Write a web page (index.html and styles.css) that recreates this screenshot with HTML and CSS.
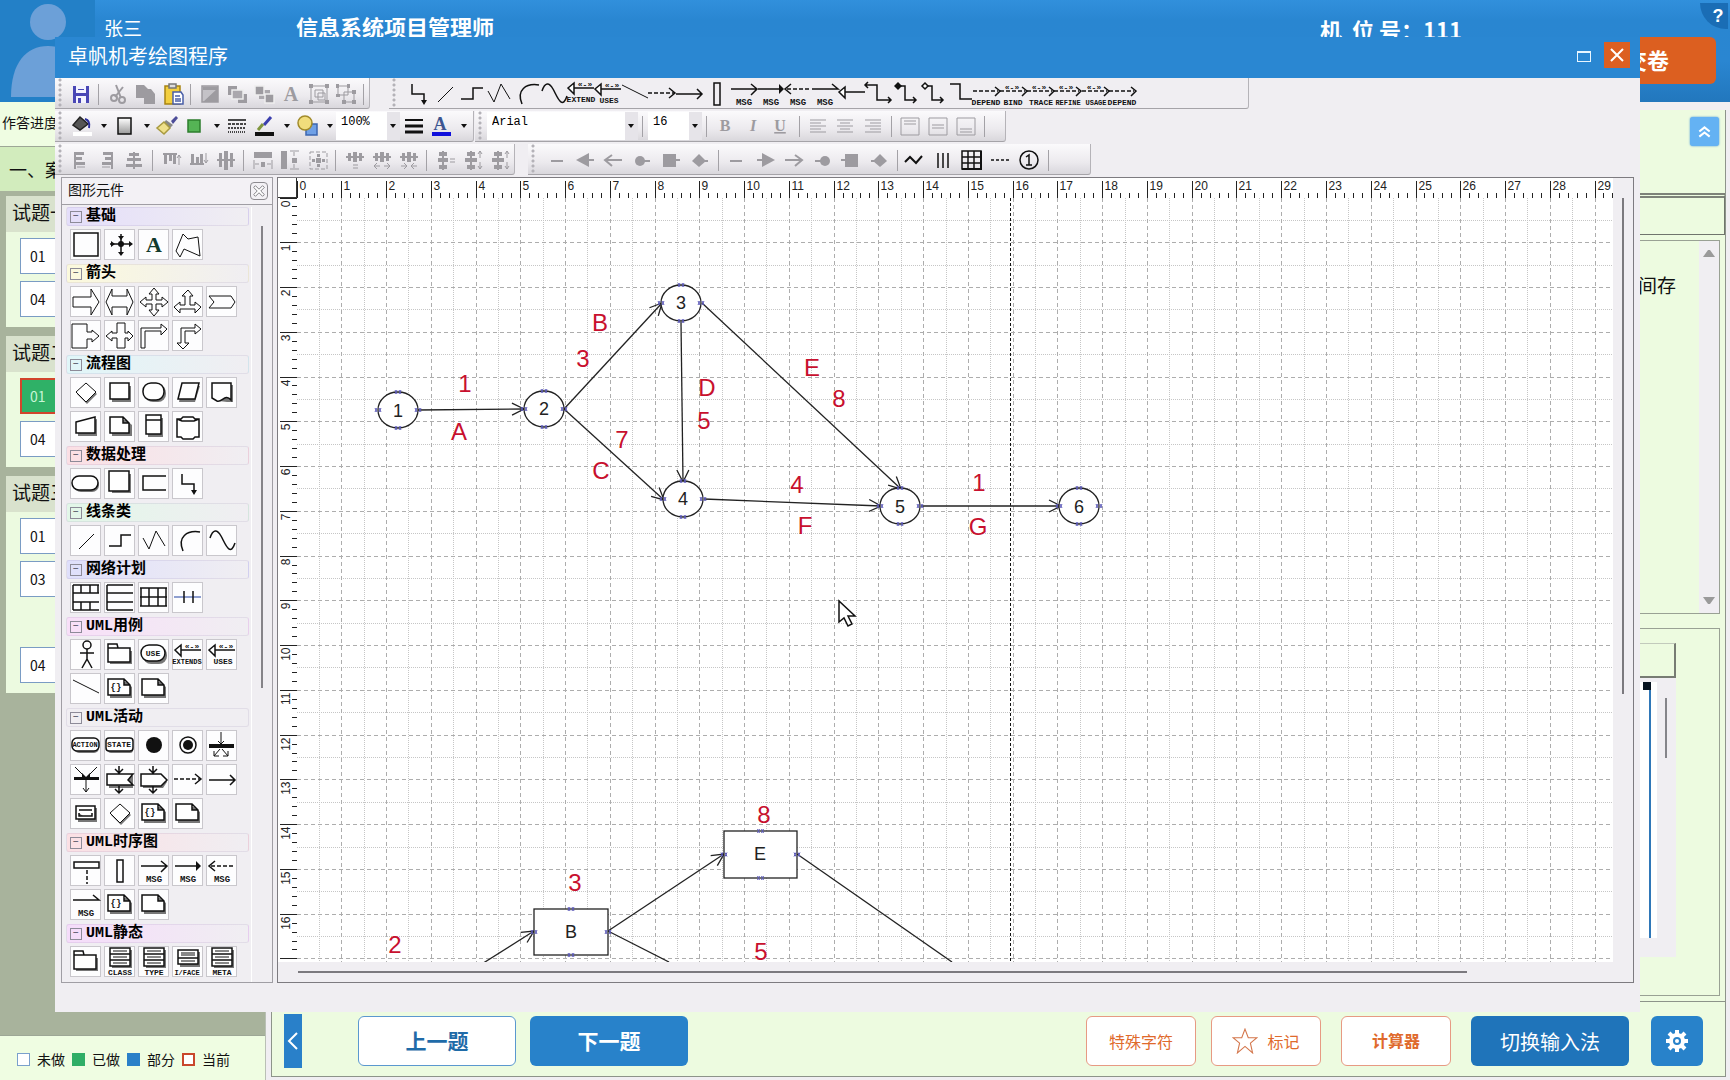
FILE: index.html
```html
<!DOCTYPE html>
<html lang="zh-CN">
<head>
<meta charset="utf-8">
<title>卓帆机考绘图程序</title>
<link rel="stylesheet" href="styles.css">
</head>
<body>
<svg class="sprite" aria-hidden="true">
  <defs>
    <!-- basic shapes -->
    <symbol id="box" viewBox="0 0 28 28"><path d="M3 2h24v23H3z"/></symbol>
    <symbol id="cross" viewBox="0 0 28 28"><path d="M5 13h20M16 3v20"/><path class="f" d="M24 10l4 3-4 3zM13 21l3 4 3-4zM13 5l3 4 3-4zM6 10l4 3-4 3z"/><circle class="f" cx="16" cy="13" r="3"/></symbol>
    <symbol id="letter" viewBox="0 0 28 28"><text class="serif" x="15" y="21">A</text></symbol>
    <symbol id="free" viewBox="0 0 28 28"><path class="t" d="M3 20l7-17 5 5 10-2 2 19-16-7-4 8z"/></symbol>
    <!-- block arrows -->
    <symbol id="a-right" viewBox="0 0 28 28"><path class="t" d="M2 9h18V1l8 13-8 13v-8H2z"/></symbol>
    <symbol id="a-both" viewBox="0 0 28 28"><path class="t" d="M1 14L7 1v7h15V1l6 13-6 13v-8H7v8z"/></symbol>
    <symbol id="a-four" viewBox="0 0 28 28"><path class="t" d="M15 0l5 6h-3v6h6V9l6 5-6 5v-3h-6v6h3l-5 6-5-6h3v-6H7v3l-6-5 6-5v3h6V6h-3z"/></symbol>
    <symbol id="a-three" viewBox="0 0 28 28"><path class="t" d="M15 2l5 6h-3v9h5v-3l6 5-6 6v-4H7v4l-6-6 6-5v3h5V8H9z"/></symbol>
    <symbol id="a-pent" viewBox="0 0 28 28"><path class="t" d="M2 8h22l4 6-4 6H2l5-6z"/></symbol>
    <symbol id="a-box" viewBox="0 0 28 28"><path class="t" d="M1 2h15v8h5V8l7 6-7 6v-3h-5v9H1z"/></symbol>
    <symbol id="a-cross" viewBox="0 0 28 28"><path class="t" d="M12 1h8v10h3V9l5 5-5 5v-3h-3v10h-8V16H7v3l-6-5 6-5v2h5z"/></symbol>
    <symbol id="a-turn" viewBox="0 0 28 28"><path class="t" d="M2 26V6h20V2l6 5-6 6V9H6v17z"/></symbol>
    <symbol id="a-turn2" viewBox="0 0 28 28"><path class="t" d="M8 6h14V2l6 5-6 5V9H12v12h4l-6 6-6-6h4z"/></symbol>
    <!-- flow chart -->
    <symbol id="diamond" viewBox="0 0 28 28"><path class="sh" d="M16 6l10 9-10 10L6 15z"/><path class="w t" d="M15 4l10 9-10 10L5 13z"/></symbol>
    <symbol id="f-rect" viewBox="0 0 28 28"><path class="sh" d="M7 7h19v16H7z"/><path class="w" d="M5 4h19v16H5z"/></symbol>
    <symbol id="f-oval" viewBox="0 0 28 28"><rect class="sh" x="6" y="6" width="21" height="17" rx="8"/><rect class="w" x="4" y="4" width="21" height="17" rx="8"/></symbol>
    <symbol id="f-para" viewBox="0 0 28 28"><path class="sh" d="M9 7h18l-5 16H6z"/><path class="w" d="M9 4h17l-4 16H5z"/></symbol>
    <symbol id="f-doc" viewBox="0 0 28 28"><path class="sh" d="M20 6h6v17h-6l-8-1z"/><path class="w" d="M5 4h19v17c-6-7-9 3-14 1l-5-3z"/></symbol>
    <symbol id="f-trap" viewBox="0 0 28 28"><path class="sh" d="M7 12l19-6v17H7z"/><path class="w" d="M5 9l19-5v16H5z"/></symbol>
    <symbol id="f-note" viewBox="0 0 28 28"><path class="sh" d="M7 7h14l6 5v11H7z"/><path class="w" d="M5 4h13l6 6v10H5zM18 4v6h6"/></symbol>
    <symbol id="f-card" viewBox="0 0 28 28"><path class="sh" d="M9 5h15v19H9z"/><path class="w" d="M7 2h15v19H7zM7 7h15"/></symbol>
    <symbol id="f-cyl" viewBox="0 0 28 28"><path class="w" d="M4 6h4l2-2h10l2 2h4v18h-4l-2 2H10l-2-2H4zM4 6l5 2h12l5-2"/></symbol>
    <symbol id="d-oval" viewBox="0 0 28 28"><rect class="sh" x="3" y="8" width="25" height="14" rx="7"/><rect class="w" x="1" y="6" width="26" height="14" rx="7"/></symbol>
    <symbol id="d-rect" viewBox="0 0 28 28"><path class="sh" d="M7 4h19v19H7z"/><path class="w" d="M4 1h20v20H4z"/></symbol>
    <symbol id="d-open" viewBox="0 0 28 28"><path d="M27 6H4v14h23"/></symbol>
    <symbol id="elbow" viewBox="0 0 28 28"><path d="M9 4v10h12v9"/><path class="f" d="M18 20h6l-3 5z"/></symbol>
    <!-- lines -->
    <symbol id="line" viewBox="0 0 28 28"><path class="t" d="M8 22L23 7"/></symbol>
    <symbol id="step" viewBox="0 0 28 28"><path d="M4 19h12V8h10"/></symbol>
    <symbol id="zig" viewBox="0 0 28 28"><path class="t" d="M4 11l6 11 7-18 9 15"/></symbol>
    <symbol id="arc" viewBox="0 0 28 28"><path d="M10 24C4 10 14 3 27 5"/></symbol>
    <symbol id="wave" viewBox="0 0 28 28"><path d="M3 11C6 2 10 2 14 9s9 22 14 7"/></symbol>
    <!-- network plan -->
    <symbol id="n1" viewBox="0 0 28 28"><path d="M2 1h26M2 9h26M2 18h26M2 26h26M2 1v25M10 1v8M19 1v8M10 18v8M19 18v8M27 1v8"/></symbol>
    <symbol id="n2" viewBox="0 0 28 28"><path d="M2 1h26M2 9h26M2 18h26M2 26h26M2 1v25"/></symbol>
    <symbol id="n3" viewBox="0 0 28 28"><path d="M1 4h27M1 13h27M1 22h27M2 4v18M10 4v18M19 4v18M27 4v18"/></symbol>
    <symbol id="n4" viewBox="0 0 28 28"><path class="blue" d="M1 13h27"/><path d="M11 7v12M20 7v12"/></symbol>
    <!-- UML -->
    <symbol id="actor" viewBox="0 0 28 28"><circle cx="16" cy="4" r="4"/><path d="M16 8v10l-5 9M16 18l5 9M9 12h14"/></symbol>
    <symbol id="folder" viewBox="0 0 28 28"><path class="sh" d="M5 10h22v13H5z"/><path class="w" d="M3 7V3h9l1 4h12v14H3zM3 7h10"/></symbol>
    <symbol id="use" viewBox="0 0 28 28"><rect class="sh" x="4" y="6" width="24" height="17" rx="8"/><rect class="w" x="2" y="4" width="24" height="16" rx="8"/><text class="m" x="14" y="15">USE</text></symbol>
    <symbol id="extends" viewBox="0 0 28 28"><path class="w" d="M28 9H8M8 4L2 9l6 6z"/><text class="m" x="19" y="8">«-»</text><text class="s" x="14" y="23">EXTENDS</text></symbol>
    <symbol id="extend" viewBox="0 0 28 28"><path class="w" d="M28 8H8M8 3L2 8l6 6z"/><text class="m" x="19" y="7">«-»</text><text class="m" x="15" y="22">EXTEND</text></symbol>
    <symbol id="uses" viewBox="0 0 28 28"><path class="w" d="M28 9H8M8 4L2 9l6 6z"/><text class="m" x="19" y="8">«-»</text><text class="m" x="16" y="23">USES</text></symbol>
    <symbol id="uline" viewBox="0 0 28 28"><path class="t" d="M2 5l26 13"/></symbol>
    <symbol id="code" viewBox="0 0 28 28"><path class="sh" d="M5 7h16l6 5v11H5z"/><path class="w" d="M3 4h16l6 6v10H3zM19 4v6h6"/><text x="11" y="15">{}</text></symbol>
    <symbol id="note" viewBox="0 0 28 28"><path class="sh" d="M5 7h16l6 5v11H5z"/><path class="w" d="M3 4h16l6 6v10H3zM19 4v6h6"/></symbol>
    <symbol id="action" viewBox="0 0 28 28"><rect class="sh" x="3" y="8" width="25" height="13" rx="5"/><rect class="w" x="1" y="6" width="27" height="13" rx="5"/><text class="s" x="14" y="15">ACTION</text></symbol>
    <symbol id="state" viewBox="0 0 28 28"><rect class="sh" x="3" y="8" width="25" height="13" rx="3"/><rect class="w" x="1" y="6" width="27" height="13" rx="3"/><text class="m" x="14" y="15">STATE</text></symbol>
    <symbol id="dot" viewBox="0 0 28 28"><circle class="f" cx="15" cy="13" r="8"/></symbol>
    <symbol id="ring" viewBox="0 0 28 28"><circle cx="15" cy="13" r="8"/><circle class="f" cx="15" cy="13" r="5"/></symbol>
    <symbol id="fork" viewBox="0 0 28 28"><path class="t" d="M14 0v12M11 9l3 3 3-3M13 17l-6 7v-5M7 24h5M15 17l6 7v-5M21 24h-5"/><path class="f" d="M2 12h25v4H2z"/></symbol>
    <symbol id="join" viewBox="0 0 28 28"><path class="t" d="M4 1l9 9M26 1l-9 9M15 14v12M12 22l3 4 3-4"/><path class="f" d="M3 11h25v3H3zM11 7l4 4 4-4v5h-8z"/></symbol>
    <symbol id="sig-in" viewBox="0 0 28 28"><path class="sh" d="M4 10h24v12H4z"/><path class="w" d="M2 8h26l-5 6 5 5H2zM14 0v7M10 3l4 4 4-4M14 20v7M10 23l4 4 4-4"/></symbol>
    <symbol id="sig-out" viewBox="0 0 28 28"><path class="sh" d="M4 10h20l4 6-4 6H4z"/><path class="w" d="M2 8h20l6 6-6 6H2zM14 0v7M10 3l4 4 4-4M14 20v7M10 23l4 4 4-4"/></symbol>
    <symbol id="dash" viewBox="0 0 28 28"><path class="d" d="M1 13h26"/><path d="M22 8l6 5-6 5"/></symbol>
    <symbol id="solid" viewBox="0 0 28 28"><path d="M2 14h26M23 9l5 5-5 5"/></symbol>
    <symbol id="sub" viewBox="0 0 28 28"><path class="sh" d="M7 8h19v14H7z"/><path class="w" d="M5 6h19v13H5zM8 10h13M8 13v3h4M21 13v3h-4M11 16h7"/></symbol>
    <symbol id="life" viewBox="0 0 28 28"><path class="w" d="M3 5h25v6H3z"/><path class="d" d="M16 13v14"/></symbol>
    <symbol id="bar" viewBox="0 0 28 28"><path d="M12 3h6v22h-6z"/></symbol>
    <symbol id="msg1" viewBox="0 0 28 28"><path d="M2 9h26M22 4l6 5-6 6"/><text x="15" y="25">MSG</text></symbol>
    <symbol id="msg2" viewBox="0 0 28 28"><path d="M2 9h22"/><path class="f" d="M23 4l5 5-5 5z"/><text x="15" y="25">MSG</text></symbol>
    <symbol id="msg3" viewBox="0 0 28 28"><path class="d" d="M4 9h24"/><path d="M8 4L2 9l6 5"/><text x="15" y="25">MSG</text></symbol>
    <symbol id="msg4" viewBox="0 0 28 28"><path d="M2 9h26l-6-5"/><text x="15" y="25">MSG</text></symbol>
    <symbol id="class" viewBox="0 0 28 28"><path class="sh" d="M7 2h20v18H7z"/><path class="w" d="M5 0h20v18H5zM5 6h20M5 12h20"/><path class="t" d="M8 3h14M8 9h14M8 15h14"/><text class="m" x="15" y="27">CLASS</text></symbol>
    <symbol id="type" viewBox="0 0 28 28"><path class="sh" d="M7 2h20v18H7z"/><path class="w" d="M5 0h20v18H5zM5 6h20M5 12h20"/><path class="t" d="M8 3h14M8 9h14M8 15h14"/><text class="m" x="15" y="27">TYPE</text></symbol>
    <symbol id="iface" viewBox="0 0 28 28"><path class="sh" d="M7 4h20v15H7z"/><path class="w" d="M5 2h20v14H5zM5 10h20"/><path class="t" d="M8 5h14M8 7h14M8 13h14"/><text class="s" x="14" y="27">I/FACE</text></symbol>
    <symbol id="meta" viewBox="0 0 28 28"><path class="sh" d="M7 2h20v18H7z"/><path class="w" d="M5 0h20v18H5zM5 6h20M5 12h20"/><path class="t" d="M8 3h14M8 9h14M8 15h14"/><text class="m" x="15" y="27">META</text></symbol>
    <!-- connector toolbar -->
    <symbol id="gen" viewBox="0 0 28 28"><path class="w" d="M28 12H8M8 7l-6 5 6 6z"/></symbol>
    <symbol id="c1" viewBox="0 0 28 28"><path d="M1 5h12v15h14M4 2L1 5l3 3M24 17l3 3-3 3"/></symbol>
    <symbol id="c2" viewBox="0 0 28 28"><path d="M8 6h5v14h11M21 17l3 3-3 3"/><path class="f" d="M6 2l4 4-4 4-4-4z"/></symbol>
    <symbol id="c3" viewBox="0 0 28 28"><path d="M8 6h5v14h11M21 17l3 3-3 3"/><path class="w" d="M6 3l3 3-3 3-3-3z"/></symbol>
    <symbol id="c4" viewBox="0 0 28 28"><path d="M4 4h10v15h12"/></symbol>
    <symbol id="dep" viewBox="0 0 28 28"><path class="d" d="M0 11h25"/><path d="M22 7l5 4-5 5"/><text class="m" x="13" y="25">DEPEND</text></symbol>
    <symbol id="bind" viewBox="0 0 28 28"><path class="d" d="M0 11h25"/><path d="M22 7l5 4-5 5"/><text class="m" x="12" y="10">«-»</text><text class="m" x="13" y="25">BIND</text></symbol>
    <symbol id="trace" viewBox="0 0 28 28"><path class="d" d="M0 11h25"/><path d="M22 7l5 4-5 5"/><text class="m" x="12" y="10">«-»</text><text class="m" x="14" y="25">TRACE</text></symbol>
    <symbol id="refine" viewBox="0 0 28 28"><path class="d" d="M0 11h25"/><path d="M22 7l5 4-5 5"/><text class="m" x="12" y="10">«-»</text><text class="s" x="14" y="25">REFINE</text></symbol>
    <symbol id="usage" viewBox="0 0 28 28"><path class="d" d="M0 11h25"/><path d="M22 7l5 4-5 5"/><text class="m" x="12" y="10">«-»</text><text class="s" x="14" y="25">USAGE</text></symbol>
    <!-- file and edit toolbar -->
    <symbol id="save" viewBox="0 0 28 28"><path fill="#4a47b5" stroke="none" d="M6 6h16v17H6z"/><path fill="#f4f4ff" stroke="none" d="M9 6h10v7H9zM9 16h10v7H9z"/><path fill="#4a47b5" stroke="none" d="M11 18h3v5h-3zM11 9h6v1h-6z"/></symbol>
    <symbol id="cut" viewBox="0 0 28 28"><path class="g2" d="M12 5l5 13M19 7l-8 10"/><circle class="g2" cx="10" cy="18" r="3"/><circle class="g2" cx="18" cy="20" r="3"/></symbol>
    <symbol id="copy" viewBox="0 0 28 28"><path class="gf" d="M5 5h8l4 4h3l4 5v10H13v-6H5z"/></symbol>
    <symbol id="paste" viewBox="0 0 28 28"><path fill="#f3cf3f" stroke="#a88412" d="M6 6h15v18H6z"/><path fill="#ddd" stroke="#777" d="M10 4h7v4h-7z"/><path fill="#fff" stroke="#4a5fa8" d="M14 12h8l2 3v9H14z"/><path stroke="#4a5fa8" d="M16 16h5M16 19h6M16 21h6"/></symbol>
    <symbol id="image" viewBox="0 0 28 28"><path fill="#c4c2c7" stroke="#9d9ba0" d="M6 6h16v16H6z"/><path class="gf" d="M7 22L22 8v14zM7 7h15v3H7z"/></symbol>
    <symbol id="front" viewBox="0 0 28 28"><path class="gf" d="M5 6h9v9H5zM15 14h9v9h-9z"/><path fill="#aaa8ad" stroke="#eee" d="M9 10h11v9H9z"/></symbol>
    <symbol id="back" viewBox="0 0 28 28"><path fill="#aaa8ad" stroke="none" d="M9 10h11v9H9z"/><path fill="#9d9ba0" stroke="#eee" d="M5 6h9v9H5zM15 14h9v9h-9z"/></symbol>
    <symbol id="gtext" viewBox="0 0 28 28"><text class="serif gray" x="14" y="21">A</text></symbol>
    <symbol id="group" viewBox="0 0 28 28"><path class="g" d="M6 6h16v16H6zM10 10h8v7h-8zM13 13h7v7h-7z"/><path class="gf" d="M4 4h4v4H4zM20 4h4v4h-4zM4 20h4v4H4zM20 20h4v4h-4z"/></symbol>
    <symbol id="ungroup" viewBox="0 0 28 28"><path class="g" d="M6 6h10v9H6zM12 12h10v10H12z"/><path class="gf" d="M4 4h3v4H4zM15 4h3v4h-3zM4 14h4v3H4zM20 10h4v4h-4zM10 20h4v4h-4zM20 20h4v4h-4z"/></symbol>
    <!-- format toolbar -->
    <symbol id="bucket" viewBox="0 0 28 28"><path fill="#555" stroke="#222" d="M13 5l8 7-8 6-7-5z"/><path stroke="#2b2f9c" stroke-width="2" d="M18 7c4 1 5 4 4 9"/><path fill="#fff" stroke="none" d="M6 20h19v4H6z"/></symbol>
    <symbol id="shade" viewBox="0 0 28 28"><path fill="url(#shadeFill)" d="M8 6h13v16H8z"/></symbol>
    <symbol id="brush" viewBox="0 0 28 28"><path fill="#4c4c98" stroke="none" d="M18 9l5-5 2 2-5 6z"/><path fill="#888" stroke="none" d="M13 8l7 5-3 3-6-5z"/><path fill="#efe08a" stroke="#a89a40" d="M11 10l6 6-6 6-7-6z"/></symbol>
    <symbol id="green" viewBox="0 0 28 28"><path fill="#55b455" stroke="#2c7d2c" d="M8 8h12v12H8z"/></symbol>
    <symbol id="dashes" viewBox="0 0 28 28"><path d="M5 8h18"/><path stroke-dasharray="3 1" d="M5 12h18"/><path stroke-dasharray="2 1" d="M5 16h18"/><path stroke-dasharray="1 1" d="M5 20h18"/></symbol>
    <symbol id="pen" viewBox="0 0 28 28"><path stroke="#3b3fae" stroke-width="3" d="M21 5l-7 8"/><path stroke="#80963e" stroke-width="3" d="M13 12l-5 6"/><path class="f" d="M5 20h19v4H5z"/></symbol>
    <symbol id="shapes" viewBox="0 0 28 28"><path fill="#6fa0e6" stroke="#3c66b0" d="M13 12h11v11H13z"/><circle cx="12" cy="11" r="7" fill="#f1dd7c" stroke="#a28b2b"/></symbol>
    <symbol id="weights" viewBox="0 0 28 28"><path stroke-width="2" d="M5 8h18"/><path stroke-width="3" d="M5 14h18M5 20h18"/></symbol>
    <symbol id="fcolor" viewBox="0 0 28 28"><text class="serif navy" x="13" y="18">A</text><path fill="#1010dc" stroke="none" d="M5 20h19v4H5z"/></symbol>
    <symbol id="bold" viewBox="0 0 28 28"><text class="fmt" x="13" y="19">B</text></symbol>
    <symbol id="ital" viewBox="0 0 28 28"><text class="fmt it" x="13" y="19">I</text></symbol>
    <symbol id="under" viewBox="0 0 28 28"><text class="fmt un" x="13" y="19">U</text></symbol>
    <symbol id="al" viewBox="0 0 28 28"><path class="g" d="M5 8h16M5 11h11M5 14h16M5 17h11M5 20h16"/></symbol>
    <symbol id="ac" viewBox="0 0 28 28"><path class="g" d="M5 8h16M8 11h10M5 14h16M8 17h10M5 20h16"/></symbol>
    <symbol id="ar" viewBox="0 0 28 28"><path class="g" d="M5 8h16M10 11h11M5 14h16M10 17h11M5 20h16"/></symbol>
    <symbol id="vt" viewBox="0 0 28 28"><path class="g" d="M4 6h18v17H4zM7 9h12M7 12h12"/></symbol>
    <symbol id="vm" viewBox="0 0 28 28"><path class="g" d="M4 6h18v17H4zM7 13h12M7 16h12"/></symbol>
    <symbol id="vb" viewBox="0 0 28 28"><path class="g" d="M4 6h18v17H4zM7 17h12M7 20h12"/></symbol>
    <!-- align toolbar -->
    <symbol id="s1" viewBox="0 0 28 28"><path class="gf" d="M8 6h2v17H8zM10 6h8v3h-8zM10 11h6v3h-6zM10 16h9v3h-9z"/><path class="g" d="M11 21h8"/></symbol>
    <symbol id="s2" viewBox="0 0 28 28"><path class="gf" d="M18 6h2v17h-2zM10 6h8v3h-8zM12 11h6v3h-6zM9 16h9v3H9z"/><path class="g" d="M9 21h8"/></symbol>
    <symbol id="s3" viewBox="0 0 28 28"><path class="gf" d="M13 6h2v17h-2zM9 7h10v3H9zM7 12h14v3H7zM6 18h16v3H6z"/></symbol>
    <symbol id="s4" viewBox="0 0 28 28"><path class="gf" d="M5 7h14v2H5zM6 9h3v9H6zM11 9h3v6h-3zM15 9h3v9h-3z"/><path class="g" d="M21 19V9M19 12l2-3 2 3"/></symbol>
    <symbol id="s5" viewBox="0 0 28 28"><path class="gf" d="M5 17h14v2H5zM6 8h3v9H6zM11 11h3v6h-3zM15 8h3v9h-3z"/><path class="g" d="M21 7v10M19 14l2 3 2-3"/></symbol>
    <symbol id="s6" viewBox="0 0 28 28"><path class="gf" d="M5 13h18v2H5zM7 7h3v14H7zM12 5h4v19h-4zM18 7h3v14h-3z"/></symbol>
    <symbol id="s7" viewBox="0 0 28 28"><path class="gf" d="M5 6h18v6H5zM12 16h4v5h-4z"/><path class="g" d="M5 14v9M23 14v9M6 18h4M18 18h4"/></symbol>
    <symbol id="s8" viewBox="0 0 28 28"><path class="gf" d="M5 5h6v18H5zM16 12h5v5h-5z"/><path class="g" d="M14 5h9M14 23h9M18 6v4M18 18v4"/></symbol>
    <symbol id="s9" viewBox="0 0 28 28"><path class="g" stroke-dasharray="4 2" d="M6 6h17v17H6z"/><path class="gf" d="M12 12h5v5h-5zM13 8h3v3h-3zM13 18h3v3h-3zM8 13h3v3H8zM18 13h3v3h-3z"/></symbol>
    <symbol id="s10" viewBox="0 0 28 28"><path class="gf" d="M5 10h18v2H5zM7 7h3v8H7zM12 6h4v10h-4zM18 7h3v8h-3z"/><path class="g" d="M12 19h5M12 22h5"/></symbol>
    <symbol id="s11" viewBox="0 0 28 28"><path class="gf" d="M5 10h18v2H5zM7 7h3v8H7zM12 6h4v10h-4zM18 7h3v8h-3z"/><path class="g" d="M6 20h6M9 17l-3 3 3 3M16 20h6M19 17l3 3-3 3"/></symbol>
    <symbol id="s12" viewBox="0 0 28 28"><path class="gf" d="M5 10h18v2H5zM7 7h3v8H7zM12 6h4v10h-4zM18 7h3v8h-3z"/><path class="g" d="M6 20h6M9 17l3 3-3 3M16 20h6M19 17l-3 3 3 3"/></symbol>
    <symbol id="s13" viewBox="0 0 28 28"><path class="gf" d="M10 5h2v19h-2zM7 6h8v4H7zM6 12h10v4H6zM7 19h8v4H7z"/><path class="g" d="M18 13h5M18 16h5"/></symbol>
    <symbol id="s14" viewBox="0 0 28 28"><path class="gf" d="M10 5h2v19h-2zM7 6h8v4H7zM5 12h12v4H5zM7 19h8v4H7z"/><path class="g" d="M20 5v7M18 8l2-3 2 3M20 16v7M18 20l2 3 2-3"/></symbol>
    <!-- line end toolbar -->
    <symbol id="e1" viewBox="0 0 28 28"><path class="g2" d="M8 15h12"/></symbol>
    <symbol id="e2" viewBox="0 0 28 28"><path class="g2" d="M17 14h5"/><path class="gf" d="M4 14l13-7v14z"/></symbol>
    <symbol id="e3" viewBox="0 0 28 28"><path class="g2" d="M5 14h17M12 9l-7 5 7 6"/></symbol>
    <symbol id="e4" viewBox="0 0 28 28"><path class="g2" d="M15 15h6"/><circle class="gf" cx="11" cy="15" r="5"/></symbol>
    <symbol id="e5" viewBox="0 0 28 28"><path class="g2" d="M17 14h6"/><path class="gf" d="M6 8h13v13H6z"/></symbol>
    <symbol id="e6" viewBox="0 0 28 28"><path class="g2" d="M17 15h5"/><path class="gf" d="M13 8l7 7-7 6-7-6z"/></symbol>
    <symbol id="jag" viewBox="0 0 28 28"><path stroke-width="2" d="M4 16l5-5 6 6 6-7"/></symbol>
    <symbol id="cols" viewBox="0 0 28 28"><path d="M8 7v15M13 7v15M18 7v15"/></symbol>
    <symbol id="grid" viewBox="0 0 28 28"><path d="M4 5h19v18H4zM4 11h19M4 17h19M10 5v18M16 5v18"/><path stroke-width="2" d="M4 23h19V5"/></symbol>
    <symbol id="dsh" viewBox="0 0 28 28"><path stroke-dasharray="3 2" d="M4 14h18"/></symbol>
    <symbol id="one" viewBox="0 0 28 28"><circle cx="13" cy="14" r="9"/><path d="M10 11l3-2v10M10 19h6"/></symbol>
    <linearGradient id="shadeFill" x2="0" y2="1"><stop stop-color="#fff"/><stop offset="1" stop-color="#999"/></linearGradient>
    <marker id="open" viewBox="0 0 14 14" refX="13" refY="7" markerWidth="14" markerHeight="14" markerUnits="userSpaceOnUse" orient="auto"><path d="M1 1l12 6-12 6" fill="none" stroke="#222" stroke-width="1.3"/></marker>
  </defs>
</svg>

<div class="app">
  <header class="top">
    <div class="avatar"><svg viewBox="0 0 95 102" aria-hidden="true"><circle cx="48" cy="22" r="18"/><path d="M11 97c0-34 15-51 37-51s37 17 37 51z"/></svg></div>
    <span class="user">张三</span>
    <h1 class="exam">信息系统项目管理师</h1>
    <span class="seat">机&nbsp; 位 号：111</span>
    <button class="submit" type="button">交卷</button>
    <button class="help" type="button">?</button>
  </header>

  <div class="body">
    <aside class="side">
      <p class="progress">作答进度</p>
      <h2 class="part">一、案</h2>
      <div class="cards">
        <section class="card"><h3>试题一</h3><div class="cells"><button type="button">01</button><button type="button">04</button></div></section>
        <section class="card"><h3>试题二</h3><div class="cells"><button type="button" class="now">01</button><button type="button">04</button></div></section>
        <section class="card"><h3>试题三</h3><div class="cells"><button type="button">01</button><button type="button">03</button><span></span><button type="button">04</button></div></section>
      </div>
      <ul class="legend">
        <li><i class="todo"></i>未做</li><li><i class="done"></i>已做</li><li><i class="partly"></i>部分</li><li><i class="current"></i>当前</li>
      </ul>
    </aside>

    <main class="main">
      <div class="paper">
        <div class="paper-top"><button class="up" type="button" aria-label="收起"><svg viewBox="0 0 28 28"><path d="M9 14l5-4 5 4M9 19l5-4 5 4"/></svg></button></div>
        <div class="strip"></div>
        <div class="question"><p>间存</p><div class="qbar"><i class="tri-up"></i><i class="tri-down"></i></div></div>
        <div class="answer">
          <div class="answer-tools"></div>
          <div class="editor"><div class="sheet"></div><div class="thumb"></div></div>
        </div>
      </div>
      <nav class="actions">
        <button class="fold" type="button" aria-label="折叠"><svg viewBox="0 0 18 54"><path d="M13 19l-8 8 8 8"/></svg></button>
        <button class="btn nav prev" type="button">上一题</button>
        <button class="btn nav next" type="button">下一题</button>
        <span class="grow"></span>
        <button class="btn tool" type="button">特殊字符</button>
        <button class="btn tool" type="button"><svg class="star" viewBox="0 0 24 24"><path d="M12 1l3 8h8l-6 5 2 9-7-6-7 6 2-9-6-5h8z"/></svg>标记</button>
        <button class="btn tool calc" type="button">计算器</button>
        <button class="btn ime" type="button">切换输入法</button>
        <button class="btn gear" type="button" aria-label="设置"><svg viewBox="0 0 24 24"><circle cx="12" cy="12" r="8"/><path class="teeth" d="M12 1v22M1 12h22M4 4l16 16M20 4L4 20"/><circle class="hole" cx="12" cy="12" r="4"/><circle class="pin" cx="12" cy="12" r="2"/></svg></button>
      </nav>
    </main>
  </div>

  <div class="dialog" role="dialog" aria-label="卓帆机考绘图程序">
    <div class="titlebar">
      <h2>卓帆机考绘图程序</h2>
      <button class="max" type="button" aria-label="最大化"></button>
      <button class="close" type="button" aria-label="关闭"><svg viewBox="0 0 26 26"><path d="M7 7l12 12M19 7L7 19"/></svg></button>
    </div>

    <div class="toolbars">
      <div class="row">
        <div class="bar b-file" data-icons="save | cut copy paste | image front back gtext group ungroup |"></div>
        <div class="bar b-lines" data-icons="elbow line step zig arc wave extend uses uline dash solid bar msg1 msg2 msg3 msg4 gen c1 c2 c3 c4 dep bind trace refine usage dep"></div>
      </div>
      <div class="row">
        <div class="bar b-style">
          <span class="set" data-icons="bucket v shade v brush green v dashes pen v shapes v"></span>
          <label class="combo zoom"><select aria-label="缩放"><option>100%</option></select></label>
          <span class="set" data-icons="weights fcolor v"></span>
        </div>
        <div class="bar b-font">
          <label class="combo face"><select aria-label="字体"><option>Arial</option></select></label>
          <i class="sep"></i>
          <label class="combo size"><select aria-label="字号"><option>16</option></select></label>
          <i class="sep"></i>
          <span class="set" data-icons="bold ital under | al ac ar | vt vm vb |"></span>
        </div>
      </div>
      <div class="row">
        <div class="bar b-align" data-icons="s1 s2 s3 | s4 s5 s6 | s7 s8 s9 | s10 s11 s12 | s13 s14 s14"></div>
        <div class="bar b-ends" data-icons="e1 e2 e3 e4 e5 e6 | e1 e2* e3* e4* e5* e6* | jag cols grid dsh one |"></div>
      </div>
    </div>

    <div class="work">
      <section class="panel">
        <div class="panel-title"><h3>图形元件</h3><button type="button" aria-label="关闭面板"><svg viewBox="0 0 18 18"><path d="M5 3l4 4 4-4 2 2-4 4 4 4-2 2-4-4-4 4-2-2 4-4-4-4z"/></svg></button></div>
        <div class="panel-body"><div class="groups" id="groups"></div><div class="thumb"></div></div>
      </section>

      <section class="pane">
        <div class="corner"></div>
        <svg class="ruler-x" id="rulerX"></svg>
        <svg class="ruler-y" id="rulerY"></svg>
        <svg class="canvas">
          <g id="gridlines"></g>
          <path class="page-edge" d="M713 0v1200"/>
          <g class="edges">
            <path d="M121 212L227 211"/><path d="M267 211L365 105"/><path d="M267 211L367 302"/>
            <path d="M384 124L386 284"/><path d="M405 105L604 291"/><path d="M407 301L584 308"/><path d="M624 308L764 308"/>
            <path d="M150 788L237 733"/><path d="M311 733L427 656"/>
            <path class="plain" d="M311 733L372 764"/><path class="plain" d="M500 656L655 764"/>
          </g>
          <g class="nodes">
            <ellipse cx="101" cy="212" rx="20" ry="18"/><ellipse cx="247" cy="211" rx="20" ry="18"/><ellipse cx="384" cy="105" rx="20" ry="18"/>
            <ellipse cx="386" cy="301" rx="20" ry="18"/><ellipse cx="603" cy="308" rx="20" ry="18"/><ellipse cx="782" cy="308" rx="20" ry="18"/>
            <rect x="237" y="711" width="74" height="46"/><rect x="427" y="633" width="73" height="47"/>
          </g>
          <g class="names">
            <text x="101" y="219">1</text><text x="247" y="217">2</text><text x="384" y="111">3</text><text x="386" y="307">4</text>
            <text x="603" y="315">5</text><text x="782" y="315">6</text><text x="274" y="740">B</text><text x="463" y="662">E</text>
          </g>
          <g class="notes">
            <text x="303" y="133">B</text><text x="286" y="169">3</text><text x="168" y="194">1</text><text x="162" y="242">A</text>
            <text x="410" y="198">D</text><text x="407" y="231">5</text><text x="515" y="178">E</text><text x="542" y="209">8</text>
            <text x="325" y="250">7</text><text x="304" y="281">C</text><text x="500" y="295">4</text><text x="508" y="336">F</text>
            <text x="682" y="293">1</text><text x="681" y="337">G</text><text x="467" y="625">8</text><text x="278" y="693">3</text>
            <text x="98" y="755">2</text><text x="464" y="762">5</text>
          </g>
          <path class="cursor" d="M542 403v21l5-4 4 8 4-2-4-8h7z"/>
        </svg>
        <div class="vbar"><div class="thumb"></div></div>
        <div class="hbar"><div class="thumb"></div></div>
      </section>
    </div>
    <div class="status"></div>
  </div>
</div>
<script src="script.js"></script>
</body>
</html>
```
FILE: styles.css
```css
* { box-sizing: border-box; }
body { margin: 0; font-family: "Liberation Sans", "Noto Sans CJK SC", sans-serif; color: #111; background: #f0eef2; overflow: hidden; }
h1, h2, h3, p, ul { margin: 0; padding: 0; font-weight: normal; }
button { padding: 0; border: 0; font: inherit; color: inherit; background: none; cursor: pointer; }
.sprite { position: absolute; width: 0; height: 0; }

.app { position: relative; display: flex; flex-direction: column; height: 100vh; min-height: 900px; }

/* page header */
.top { position: relative; display: flex; align-items: flex-start; height: 102px; background: linear-gradient(#3190dc, #2986d1 20%, #2a86d1 60%, #2277bd); color: #fff; }
.avatar { width: 95px; height: 102px; background: #2380c7; }
.avatar svg { display: block; height: 102px; fill: #6ca0d8; }
.user { margin-left: 9px; padding-top: 16px; font-size: 19px; line-height: 28px; }
.exam { margin-left: 154px; padding-top: 12px; font-size: 22px; line-height: 34px; font-weight: bold; }
.seat { margin-left: auto; padding-top: 12px; margin-right: 104px; width: 154px; font: bold 22px/34px "Noto Sans CJK SC", sans-serif; white-space: nowrap; }
.submit { width: 138px; height: 47px; margin-top: 37px; margin-right: 14px; padding-bottom: 3px; border-radius: 6px; background: #dc5f20; font-size: 22px; font-weight: bold; }
.help { position: absolute; top: 3px; right: 2px; width: 28px; height: 26px; border-radius: 0 0 0 28px; background: #1a6db5; font: bold 18px/22px "Liberation Sans", sans-serif; padding-left: 8px; }

/* question list */
.body { display: flex; flex: 1; min-height: 0; }
.side { display: flex; flex-direction: column; width: 266px; border-right: 1px solid #b9c0b5; background: #a8b39c; }
.progress { height: 45px; padding: 0 2px; border-bottom: 1px solid #9da796; background: #effde2; font-size: 14px; line-height: 42px; }
.part { height: 44px; padding-left: 9px; background: #d2ecbd; font-size: 18px; line-height: 48px; }
.cards { display: flex; flex: 1; flex-direction: column; gap: 9px; padding: 5px 6px; }
.card { background: #ecfae0; }
.card h3 { height: 36px; padding-left: 6px; background: #d9e2cd; font-size: 19px; line-height: 36px; }
.cells { display: grid; grid-auto-rows: 36px; gap: 7px; padding: 6px 14px 10px; }
.cells button { width: 60px; padding-left: 9px; border: 1px solid #7a9cc4; background: #fff; font-size: 14px; font-family: "Noto Sans CJK SC", sans-serif; text-align: left; }
.cells .now { border: 2px solid #d2452c; padding-left: 8px; background: #2fb167; color: #c9f5d6; }
.legend { display: flex; gap: 7px; align-items: center; height: 45px; padding: 2px 0 0 17px; border-top: 1px solid #9da796; background: #effde2; list-style: none; font-size: 14px; }
.legend li { display: flex; align-items: center; gap: 7px; }
.legend i { width: 13px; height: 13px; border: 1px solid #7aa0cc; background: #fff; }
.legend .done { border-color: #2fae66; background: #2fae66; }
.legend .partly { border-color: #2a80c8; background: #2a80c8; }
.legend .current { border: 2px solid #c9472c; }

/* question paper, mostly behind the drawing window */
.main { display: flex; flex: 1; flex-direction: column; margin: 8px 4px 3px 5px; border: 1px solid #8d948a; border-top: 0; background: #edfbe0; }
.paper { display: flex; flex: 1; flex-direction: column; padding-bottom: 5px; }
.paper-top { display: flex; justify-content: flex-end; height: 83px; padding: 7px 6px; }
.up { width: 29px; height: 29px; border-radius: 3px; background: #64b2f3; box-shadow: 0 0 2px #3d8fd6; }
.up svg { display: block; fill: none; stroke: #fff; stroke-width: 2; }
.strip { height: 42px; border: 1px solid #6f746c; border-top: 5px double #7d8279; }
.question { display: flex; justify-content: flex-end; height: 374px; margin: 5px 5px 0; border: 1px solid #99a194; }
.question p { padding-top: 30px; margin-right: 23px; font-size: 19px; line-height: 32px; }
.qbar { display: flex; flex-direction: column; justify-content: space-between; width: 20px; padding: 9px 4px; background: #f0eef2; }
.tri-up, .tri-down { border: 5px solid transparent; border-top: 0; border-bottom: 7px solid #9a9a9a; }
.tri-down { border-bottom: 0; border-top: 7px solid #9a9a9a; }
.answer { display: flex; flex: 1; flex-direction: column; margin: 14px 5px 0; padding: 14px 43px 38px 20px; border: 1px solid #99a194; }
.answer-tools { height: 35px; border: 1px solid #aeb6a8; border-width: 1px 2px 2px 1px; border-color: #c2cabc #777c73 #777c73 #c2cabc; }
.editor { display: flex; flex: 1; gap: 8px; background: #f0eef2; padding: 4px 9px 19px 0; }
.sheet { flex: 1; background: linear-gradient(270deg, #fff 6px, #2f77b8 6px, #2f77b8 8px, #fff 8px); }
.sheet::before { content: ""; display: block; width: 8px; height: 8px; margin: 0 6px 0 auto; background: #06131f; }
.editor .thumb { width: 2px; height: 60px; margin-top: 16px; background: #85858a; }

.actions { display: flex; align-items: center; height: 75px; padding: 4px 22px 0 12px; border-top: 1px solid #8d948a; }
.fold { width: 18px; height: 54px; background: #2980c9; }
.fold svg { display: block; fill: none; stroke: #fff; stroke-width: 2; }
.btn { height: 50px; border-radius: 6px; font-size: 20px; }
.nav { width: 158px; padding-bottom: 3px; font-size: 21px; font-weight: bold; }
.prev { margin-left: 56px; border: 1px solid #5b98cf; background: #fff; color: #1f6ba8; }
.next { margin-left: 14px; background: #2882ca; color: #fff; }
.grow { flex: 1; }
.tool { display: flex; align-items: center; justify-content: center; gap: 9px; width: 110px; margin-right: 15px; border: 1px solid #e79a83; background: #fff; color: #df6a2c; font-size: 16px; }
.calc { margin: 0 20px 0 5px; padding-bottom: 3px; font-weight: bold; }
.star { width: 26px; height: 26px; fill: none; stroke: #d3754a; stroke-width: 1; }
.ime { width: 158px; background: #1f74ba; color: #fff; }
.gear { width: 52px; margin-left: 22px; background: #2882ca; }
.gear svg { display: block; width: 24px; height: 24px; margin: auto; fill: #fff; }
.gear .teeth { stroke: #fff; stroke-width: 4; }
.gear .hole { fill: #2882ca; }
.gear .pin { fill: #fff; }

/* drawing window */
.dialog { position: absolute; inset: 37px 90px 68px 55px; display: flex; flex-direction: column; background: #f0eef2; }
.titlebar { display: flex; align-items: flex-start; height: 41px; padding-left: 13px; background: #2a87d2; color: #fff; }
.titlebar h2 { flex: 1; font-size: 20px; line-height: 40px; }
.max { width: 14px; height: 11px; margin: 14px 13px 0 0; border: 1px solid #e8f6ff; border-top-width: 2px; }
.close { width: 26px; height: 26px; margin: 5px 10px 0 0; background: #dc5f20; }
.close svg { display: block; stroke: #fff; stroke-width: 2; }

.toolbars { display: flex; flex-direction: column; gap: 2px; padding-bottom: 2px; }
.row { display: flex; height: 31px; }
.bar { display: flex; align-items: center; padding-left: 12px; border-right: 1px solid #b5b3b8; border-bottom: 1px solid #a5a3a8; border-radius: 0 0 3px 0; background: radial-gradient(circle at 5px 3px, #b4b2b8 1px, transparent 2px) 0 4px / 10px 5px repeat-y, linear-gradient(#fbfafc, #eceaee 60%, #d9d7dc); }
.b-file { width: 315px; margin-right: 19px; padding-top: 2px; }
.b-lines { width: 860px; padding: 2px 112px 0 14px; background: radial-gradient(circle at 5px 3px, #b4b2b8 1px, transparent 2px) 0 4px / 10px 5px repeat-y, #f0eef2; }
.b-style { width: 419px; }
.b-font { width: 531px; margin-left: 1px; }
.b-align { width: 460px; margin-right: 13px; padding: 2px 0 0 11px; }
.b-ends { width: 563px; padding: 2px 38px 0 15px; }
.set { display: flex; align-items: center; }
.b-font .set { width: 278px; }
.bar .ico { flex: 1 1 27px; min-width: 0; height: 28px; }
.b-style .ico { flex: 0 0 27px; }
.ico svg { display: block; width: 28px; height: 28px; }
.ico.flip svg { transform: scaleX(-1); }
.drop { flex: 0 0 16px; width: 16px; height: 28px; display: flex; align-items: center; justify-content: center; }
.b-style .drop { padding-left: 3px; }
.drop::before, .combo::after { content: ""; border: 3px solid transparent; border-top: 4px solid #111; border-bottom: 0; }
.sep { flex: 0 0 10px; height: 21px; background: linear-gradient(90deg, transparent 4px, #a3a1a6 4px, #a3a1a6 5px, transparent 5px); }
.b-ends .sep { flex-basis: 8px; }
.combo { display: flex; align-items: center; height: 28px; padding-right: 4px; background: linear-gradient(270deg, #e6e4e9 13px, #fff 13px); }
.combo select { flex: 1; min-width: 0; height: 28px; padding: 0 5px 8px; border: 0; appearance: none; background: none; font: 12px/20px "Liberation Mono", monospace; }
.zoom { width: 64px; }
.face { width: 151px; }
.size { width: 54px; }

/* icon strokes */
symbol, .ico svg, .tile svg { overflow: visible; fill: none; stroke: #111; stroke-width: 1.5; }
.f { fill: #111; stroke: none; }
.w { fill: #fff; stroke: #111; }
.t { stroke-width: 1; }
.d { stroke-dasharray: 4 2; }
.sh { fill: #777; stroke: none; }
.blue { stroke: #6a7fc0; }
.g { stroke: #9d9ba0; stroke-width: 1; }
.g2 { stroke: #9d9ba0; stroke-width: 2; }
.gf { fill: #9d9ba0; stroke: none; }
symbol text { font: bold 9px "Liberation Mono", monospace; text-anchor: middle; fill: #111; stroke: none; }
symbol .m { font-size: 8px; }
symbol .s { font-size: 7px; }
symbol .serif { font: bold 22px "Liberation Serif", serif; fill: #123a2c; }
symbol .gray { font-size: 20px; fill: #9d9ba0; }
symbol .navy { font-size: 18px; fill: #3c5590; }
symbol .fmt { font: bold 16px "Liberation Serif", serif; fill: #9d9ba0; }
symbol .it { font-style: italic; }
symbol .un { text-decoration: underline; }

.work { display: flex; flex: 1; gap: 4px; min-height: 0; padding: 0 6px; }

/* shape palette */
.panel { display: flex; flex-direction: column; width: 212px; border: 1px solid #a09ea4; overflow: hidden; }
.panel-title { display: flex; align-items: center; height: 27px; padding: 0 4px 0 6px; border-bottom: 1px solid #a09ea4; background: #f3f1f5; }
.panel-title h3 { flex: 1; font-size: 14px; line-height: 22px; padding-bottom: 3px; }
.panel-title button { width: 18px; height: 18px; border: 1px solid #8d8b90; border-radius: 4px; }
.panel-title svg { display: block; fill: #fff; stroke: #77757a; }
.panel-body { display: flex; flex: 1; min-height: 0; padding: 2px 9px 0 4px; }
.groups { flex: 1; padding-right: 2px; border-right: 1px solid #fff; }
.panel-body .thumb { width: 2px; height: 462px; margin: 19px 0 0 9px; background: #858388; }
.group { padding-bottom: 4px; }
.group h4 { display: flex; align-items: center; gap: 4px; height: 19px; margin: 0 0 3px; padding-left: 3px; border: 1px solid rgba(120, 100, 160, .12); border-radius: 3px; font: bold 15px/19px "Liberation Mono", "Noto Sans CJK SC", monospace; color: #000; background: linear-gradient(90deg, var(--tint), #f0eef2); }
.group h4::before { content: "−"; width: 10px; height: 10px; border: 1px solid #8d8b98; font: 10px/7px "Liberation Sans", sans-serif; text-align: center; color: #445; }
.tiles { display: grid; grid-template-columns: repeat(5, 31px); grid-auto-rows: 31px; gap: 3px; padding-left: 4px; }
.tile { border: 1px solid #c9c7cc; background: #fdfdfe; }
.tile svg { display: block; width: 28px; height: 28px; }

/* canvas */
.pane { display: grid; flex: 1; grid-template: 20px 1fr 20px / 19px 1fr 20px; min-width: 0; border: 1px solid #7d7b80; }
.corner { border: 1px solid #333; border-width: 0 1px 1px 0; background: #fff; }
.pane svg { width: 100%; height: 100%; min-height: 0; background: #fff; }
.ruler-x text, .ruler-y text { font: 12px "Liberation Sans", sans-serif; fill: #222; }
.ruler-x path, .ruler-y path { stroke: #222; stroke-width: 1; shape-rendering: crispEdges; }
.ruler-y text { text-anchor: end; }
.vbar { grid-area: 1 / 3 / 3 / 4; padding: 20px 0 0 9px; }
.vbar .thumb { width: 2px; height: 496px; background: #7b797e; }
.hbar { grid-area: 3 / 1 / 4 / 4; padding: 9px 166px 0 20px; }
.hbar .thumb { height: 2px; background: #7b797e; }
.canvas { grid-area: 2 / 2; overflow: hidden; }
.major { fill: none; stroke: #adadad; stroke-dasharray: 4 3; shape-rendering: crispEdges; }
.minor { fill: none; stroke: #c6c6c6; stroke-dasharray: 1 1; shape-rendering: crispEdges; }
.page-edge { stroke: #111; stroke-dasharray: 3 2; shape-rendering: crispEdges; }
.edges path { fill: none; stroke: #222; stroke-width: 1.3; marker-end: url(#open); }
.edges .plain { marker-end: none; }
.nodes ellipse, .nodes rect { fill: #fff; stroke: #222; stroke-width: 1.3; }
.port { stroke: #5a58b8; }
.names text { font: 18px "Liberation Sans", sans-serif; text-anchor: middle; fill: #222; }
.notes text { font: 24px "Liberation Sans", sans-serif; text-anchor: middle; fill: #c8102e; }
.cursor { fill: #fff; stroke: #111; stroke-width: 1.5; }

.status { height: 29px; }
```
FILE: script.js
```js
const NS = 'http://www.w3.org/2000/svg';
const icon = id => `<svg viewBox="0 0 28 28"><use href="#${id}"/></svg>`;

// Toolbars: "|" is a separator, "v" a drop-down arrow, "*" mirrors the icon.
document.querySelectorAll('[data-icons]').forEach(bar => {
  bar.innerHTML = bar.dataset.icons.split(' ').map(name => {
    if (name === '|') return '<i class="sep"></i>';
    if (name === 'v') return '<button type="button" class="drop" aria-label="更多"></button>';
    const flip = name.endsWith('*') ? ' flip' : '';
    const id = name.replace('*', '');
    return `<button type="button" class="ico${flip}" aria-label="${id}">${icon(id)}</button>`;
  }).join('');
});

// Shape palette
const palette = [
  ['基础', '#e4defa', 'box cross letter free'],
  ['箭头', '#fbf9dc', 'a-right a-both a-four a-three a-pent a-box a-cross a-turn a-turn2'],
  ['流程图', '#e0f6f8', 'diamond f-rect f-oval f-para f-doc f-trap f-note f-card f-cyl'],
  ['数据处理', '#fbdfe4', 'd-oval d-rect d-open elbow'],
  ['线条类', '#e2f7e8', 'line step zig arc wave'],
  ['网络计划', '#dfdffb', 'n1 n2 n3 n4'],
  ['UML用例', '#f8dff8', 'actor folder use extends uses uline code note'],
  ['UML活动', '#f0eef2', 'action state dot ring fork join sig-in sig-out dash solid sub diamond code note'],
  ['UML时序图', '#fbe0e4', 'life bar msg1 msg2 msg3 msg4 code note'],
  ['UML静态', '#f5dcfa', 'folder class type iface meta']
];
document.getElementById('groups').innerHTML = palette.map(([name, tint, ids]) =>
  `<div class="group"><h4 style="--tint:${tint}">${name}</h4><div class="tiles">` +
  ids.split(' ').map(id => `<button type="button" class="tile" aria-label="${id}">${icon(id)}</button>`).join('') +
  '</div></div>').join('');

// Rulers and grid: one centimetre on screen
const CM = 44.76;
const add = (parent, tag, attrs, text) => {
  const el = document.createElementNS(NS, tag);
  for (const k in attrs) el.setAttribute(k, attrs[k]);
  if (text !== undefined) el.textContent = text;
  parent.append(el);
};
const rx = document.getElementById('rulerX');
const ry = document.getElementById('rulerY');
const grid = document.getElementById('gridlines');
const canvas = grid.ownerSVGElement.getBoundingClientRect();
const mid = n => Math.floor(n) + 0.5;
const rule = (svg, length, vertical) => {
  for (let i = 0; i * CM / 5 < length; i++) {
    const p = mid(i * CM / 5);
    const from = i % 5 ? 14 : 2;
    add(svg, 'path', { d: vertical ? `M${from} ${p}H19` : `M${p} ${from + 1}V20` });
    if (i % 5) continue;
    if (vertical && p + 14 > length) continue;
    add(svg, 'text', vertical ? { transform: `translate(12 ${p + 2}) rotate(-90)` } : { x: p + 2, y: 12 }, i / 5);
  }
};
rule(rx, canvas.width, false);
rule(ry, canvas.height, true);
['minor', 'major'].forEach((kind, k) => {
  let d = '';
  for (let x = CM / (k ? 1 : 2); x < canvas.width; x += CM) d += `M${mid(x)} 0V${canvas.height}`;
  for (let y = CM / (k ? 1 : 2); y < canvas.height; y += CM) d += `M0 ${mid(y)}H${canvas.width}`;
  add(grid, 'path', { class: kind, d });
});

// Connection points on the four sides of every node
document.querySelectorAll('.nodes > *').forEach(node => {
  const b = node.getBBox();
  const cx = b.x + b.width / 2, cy = b.y + b.height / 2;
  [[cx, b.y], [cx, b.y + b.height], [b.x, cy], [b.x + b.width, cy]].forEach(([x, y]) =>
    add(node.parentNode, 'path', { class: 'port', d: `M${x - 3} ${y - 2}l2 4m0-4l-2 4M${x + 3} ${y - 2}l-2 4m0-4l2 4` }));
});
```
